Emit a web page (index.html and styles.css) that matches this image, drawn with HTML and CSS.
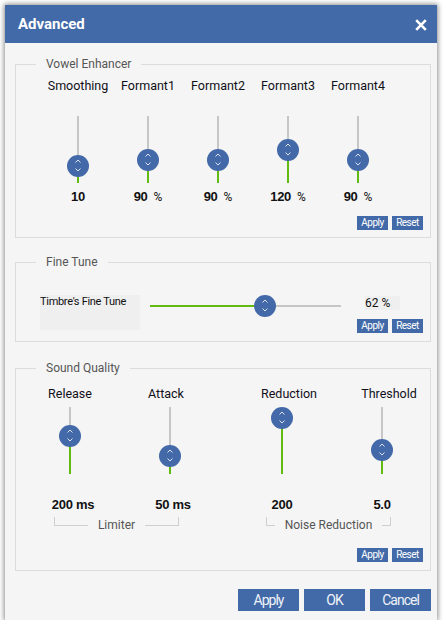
FILE: index.html
```html
<!DOCTYPE html>
<html>
<head>
<meta charset="utf-8">
<link rel="stylesheet" href="styles.css">
</head>
<body>
<div class="dialog">
  <div class="titlebar">
    <span class="title">Advanced</span>
    <svg class="close" viewBox="0 0 12 12" width="12" height="12"><path d="M1.2 1.2L10.8 10.8M10.8 1.2L1.2 10.8" stroke="#fff" stroke-width="2.6" fill="none"/></svg>
  </div>

  <fieldset class="group vowel">
    <legend>Vowel Enhancer</legend>
    <div class="vcols">
      <div class="vcol">
        <div class="slabel">Smoothing</div>
        <div class="vtrack"><div class="vfill" style="height:17px"></div><svg class="thumb" style="bottom:17px" viewBox="0 0 22 22" width="22" height="22"><circle cx="11" cy="11" r="11" fill="#4469a9"/><path d="M8.5 7.5L11 5 13.5 7.5M8.5 13.5L11 16 13.5 13.5" fill="none" stroke="#dbe3f0" stroke-width="1"/></svg></div>
        <div class="value">10</div>
      </div>
      <div class="vcol">
        <div class="slabel">Formant1</div>
        <div class="vtrack"><div class="vfill" style="height:23px"></div><svg class="thumb" style="bottom:23px" viewBox="0 0 22 22" width="22" height="22"><circle cx="11" cy="11" r="11" fill="#4469a9"/><path d="M8.5 7.5L11 5 13.5 7.5M8.5 13.5L11 16 13.5 13.5" fill="none" stroke="#dbe3f0" stroke-width="1"/></svg></div>
        <div class="value">90<span class="unit">%</span></div>
      </div>
      <div class="vcol">
        <div class="slabel">Formant2</div>
        <div class="vtrack"><div class="vfill" style="height:23px"></div><svg class="thumb" style="bottom:23px" viewBox="0 0 22 22" width="22" height="22"><circle cx="11" cy="11" r="11" fill="#4469a9"/><path d="M8.5 7.5L11 5 13.5 7.5M8.5 13.5L11 16 13.5 13.5" fill="none" stroke="#dbe3f0" stroke-width="1"/></svg></div>
        <div class="value">90<span class="unit">%</span></div>
      </div>
      <div class="vcol">
        <div class="slabel">Formant3</div>
        <div class="vtrack"><div class="vfill" style="height:33px"></div><svg class="thumb" style="bottom:33px" viewBox="0 0 22 22" width="22" height="22"><circle cx="11" cy="11" r="11" fill="#4469a9"/><path d="M8.5 7.5L11 5 13.5 7.5M8.5 13.5L11 16 13.5 13.5" fill="none" stroke="#dbe3f0" stroke-width="1"/></svg></div>
        <div class="value">120<span class="unit">%</span></div>
      </div>
      <div class="vcol">
        <div class="slabel">Formant4</div>
        <div class="vtrack"><div class="vfill" style="height:23px"></div><svg class="thumb" style="bottom:23px" viewBox="0 0 22 22" width="22" height="22"><circle cx="11" cy="11" r="11" fill="#4469a9"/><path d="M8.5 7.5L11 5 13.5 7.5M8.5 13.5L11 16 13.5 13.5" fill="none" stroke="#dbe3f0" stroke-width="1"/></svg></div>
        <div class="value">90<span class="unit">%</span></div>
      </div>
    </div>
    <div class="actions">
      <button class="mini">Apply</button>
      <button class="mini">Reset</button>
    </div>
  </fieldset>

  <fieldset class="group finetune">
    <legend>Fine Tune</legend>
    <div class="ft-row">
      <div class="ft-label">Timbre's Fine Tune</div>
      <div class="hslider">
        <div class="htrack"><div class="hfill" style="width:115px"></div></div>
        <svg class="hthumb" style="left:115px" viewBox="0 0 22 22" width="22" height="22"><circle cx="11" cy="11" r="11" fill="#4469a9"/><path d="M8.5 7.5L11 5 13.5 7.5M8.5 13.5L11 16 13.5 13.5" fill="none" stroke="#dbe3f0" stroke-width="1"/></svg>
      </div>
      <div class="ft-side">
        <div class="ft-value">62 %</div>
        <div class="actions side">
          <button class="mini">Apply</button>
          <button class="mini">Reset</button>
        </div>
      </div>
    </div>
  </fieldset>

  <fieldset class="group sound">
    <legend>Sound Quality</legend>
    <div class="sq-cols">
      <div class="sq-group">
        <div class="sq-pair">
          <div class="vcol">
            <div class="slabel">Release</div>
            <div class="vtrack sq"><div class="vfill" style="height:38px"></div><svg class="thumb" style="bottom:38px" viewBox="0 0 22 22" width="22" height="22"><circle cx="11" cy="11" r="11" fill="#4469a9"/><path d="M8.5 7.5L11 5 13.5 7.5M8.5 13.5L11 16 13.5 13.5" fill="none" stroke="#dbe3f0" stroke-width="1"/></svg></div>
            <div class="value sqv r3">200 ms</div>
          </div>
          <div class="vcol">
            <div class="slabel l4">Attack</div>
            <div class="vtrack sq"><div class="vfill" style="height:18px"></div><svg class="thumb" style="bottom:18px" viewBox="0 0 22 22" width="22" height="22"><circle cx="11" cy="11" r="11" fill="#4469a9"/><path d="M8.5 7.5L11 5 13.5 7.5M8.5 13.5L11 16 13.5 13.5" fill="none" stroke="#dbe3f0" stroke-width="1"/></svg></div>
            <div class="value sqv r3">50 ms</div>
          </div>
        </div>
        <div class="bracket"><span>Limiter</span></div>
      </div>
      <div class="sq-group">
        <div class="sq-pair">
          <div class="vcol">
            <div class="slabel r7">Reduction</div>
            <div class="vtrack sq"><div class="vfill" style="height:56px"></div><svg class="thumb" style="bottom:56px" viewBox="0 0 22 22" width="22" height="22"><circle cx="11" cy="11" r="11" fill="#4469a9"/><path d="M8.5 7.5L11 5 13.5 7.5M8.5 13.5L11 16 13.5 13.5" fill="none" stroke="#dbe3f0" stroke-width="1"/></svg></div>
            <div class="value sqv">200</div>
          </div>
          <div class="vcol">
            <div class="slabel r7">Threshold</div>
            <div class="vtrack sq"><div class="vfill" style="height:24px"></div><svg class="thumb" style="bottom:24px" viewBox="0 0 22 22" width="22" height="22"><circle cx="11" cy="11" r="11" fill="#4469a9"/><path d="M8.5 7.5L11 5 13.5 7.5M8.5 13.5L11 16 13.5 13.5" fill="none" stroke="#dbe3f0" stroke-width="1"/></svg></div>
            <div class="value sqv">5.0</div>
          </div>
        </div>
        <div class="bracket"><span>Noise Reduction</span></div>
      </div>
    </div>
    <div class="actions sq-actions">
      <button class="mini">Apply</button>
      <button class="mini">Reset</button>
    </div>
  </fieldset>

  <div class="footer">
    <button class="btn">Apply</button>
    <button class="btn">OK</button>
    <button class="btn">Cancel</button>
  </div>
</div>
</body>
</html>
```

FILE: styles.css
```css
* { box-sizing: border-box; }

body {
  margin: 0;
  background: #ffffff;
  font-family: Roboto, "Noto Sans", sans-serif;
}

.dialog {
  margin: 5px 0 0 5px;
  width: 432px;
  height: 615px;
  background: #f5f5f5;
  box-shadow: 0 0 5px 1px rgba(0, 0, 0, 0.45);
  display: flex;
  flex-direction: column;
}

.titlebar {
  height: 38px;
  flex: none;
  background: #436aa8;
  display: flex;
  align-items: center;
  justify-content: space-between;
  padding: 0 10px 0 13px;
}

.title {
  color: #ffffff;
  font-weight: 700;
  font-size: 15px;
  line-height: 38px;
}

.close {
  display: block;
  margin-top: 1px;
}

.group {
  flex: none;
  margin: 0 0 0 10px;
  width: 416px;
  min-width: 0;
  padding: 0;
  border: 1px solid #dcdcdc;
}

.group legend {
  margin-left: 20px;
  padding: 0 10px;
  font-size: 12px;
  line-height: 16px;
  color: #555555;
}

.vowel {
  margin-top: 13px;
  padding-bottom: 7px;
}

.vcols {
  display: grid;
  grid-template-columns: repeat(5, 70px);
  padding-left: 27px;
  margin-top: 7px;
}

.vcol {
  display: flex;
  flex-direction: column;
  align-items: center;
}

.slabel {
  font-size: 12.5px;
  line-height: 14px;
  color: #101018;
  white-space: nowrap;
}

.slabel.l4 { margin-right: 8px; }
.slabel.r7 { margin-left: 14px; }

.vtrack {
  position: relative;
  margin-top: 23px;
  width: 2px;
  height: 67px;
  background: #c6c6c6;
  display: flex;
  flex-direction: column;
  justify-content: flex-end;
}

.vtrack.sq { margin-top: 6px; }

.vfill {
  width: 2px;
  background: #62bb10;
}

.thumb {
  position: absolute;
  left: 50%;
  transform: translate(-50%, 50%);
  display: block;
}

.value {
  margin-top: 6px;
  font-family: "Liberation Sans", Arial, sans-serif;
  font-weight: 700;
  font-size: 13px;
  line-height: 16px;
  letter-spacing: -0.3px;
  color: #111111;
  white-space: pre;
}

.value .unit {
  margin-left: 6px;
  font-family: Roboto, sans-serif;
  font-weight: 400;
  font-size: 12px;
  letter-spacing: 0;
}

.value.sqv { margin-top: 23px; }
.value.r3 { margin-left: 6px; }

.actions {
  display: flex;
  justify-content: flex-end;
  gap: 4px;
  padding-right: 7px;
  margin-top: 11px;
}

.mini {
  width: 31px;
  height: 14px;
  padding: 0;
  border: 0;
  background: #436aa8;
  color: #ffffff;
  font-family: Roboto, sans-serif;
  font-size: 10px;
  line-height: 14px;
  letter-spacing: -0.5px;
}

/* Fine tune */
.finetune {
  margin-top: 16px;
  padding-bottom: 8px;
}

.ft-row {
  display: flex;
  align-items: flex-start;
  padding: 25px 7px 0 24px;
}

.ft-label {
  width: 100px;
  height: 35px;
  flex: none;
  background: #efefef;
  font-size: 11px;
  line-height: 14px;
  letter-spacing: -0.3px;
  color: #111111;
  white-space: nowrap;
}

.hslider {
  position: relative;
  flex: none;
  width: 191px;
  height: 22px;
  margin-left: 10px;
  display: flex;
  align-items: center;
}

.htrack {
  width: 100%;
  height: 2px;
  background: #c6c6c6;
  display: flex;
}

.hfill {
  height: 2px;
  background: #62bb10;
}

.hthumb {
  position: absolute;
  top: 0;
  transform: translateX(-50%);
  display: block;
}

.ft-side {
  flex: none;
  width: 66px;
  margin-left: 16px;
  display: flex;
  flex-direction: column;
}

.ft-value {
  margin: 1px 0 0 8px;
  width: 35px;
  height: 14px;
  background: #efefef;
  font-size: 12px;
  line-height: 14px;
  color: #111111;
}

.actions.side {
  padding-right: 0;
  margin-top: 9px;
}

/* Sound quality */
.sound {
  margin-top: 18px;
  padding-bottom: 8px;
}

.sq-cols {
  display: flex;
  gap: 12px;
  padding-left: 4px;
  margin-top: 11px;
}

.sq-group {
  flex: none;
  width: 200px;
}

.sq-pair {
  display: grid;
  grid-template-columns: 100px 100px;
}

.bracket {
  margin: 4px 41px 0 34px;
  height: 9px;
  border: 1px solid #cfcfcf;
  border-top: 0;
  display: flex;
  justify-content: center;
}

.bracket span {
  margin-top: 1px;
  height: 14px;
  padding: 0 10px;
  background: #f5f5f5;
  font-size: 12px;
  line-height: 14px;
  color: #555555;
  white-space: nowrap;
}

.sq-actions { margin-top: 22px; }

/* Footer */
.footer {
  flex: none;
  display: flex;
  justify-content: flex-end;
  gap: 5px;
  padding-right: 6px;
  margin-top: 18px;
}

.btn {
  width: 61px;
  height: 22px;
  padding: 0;
  border: 0;
  background: #436aa8;
  color: #eef2f8;
  font-family: Roboto, sans-serif;
  font-size: 14px;
  letter-spacing: -1px;
}
```
